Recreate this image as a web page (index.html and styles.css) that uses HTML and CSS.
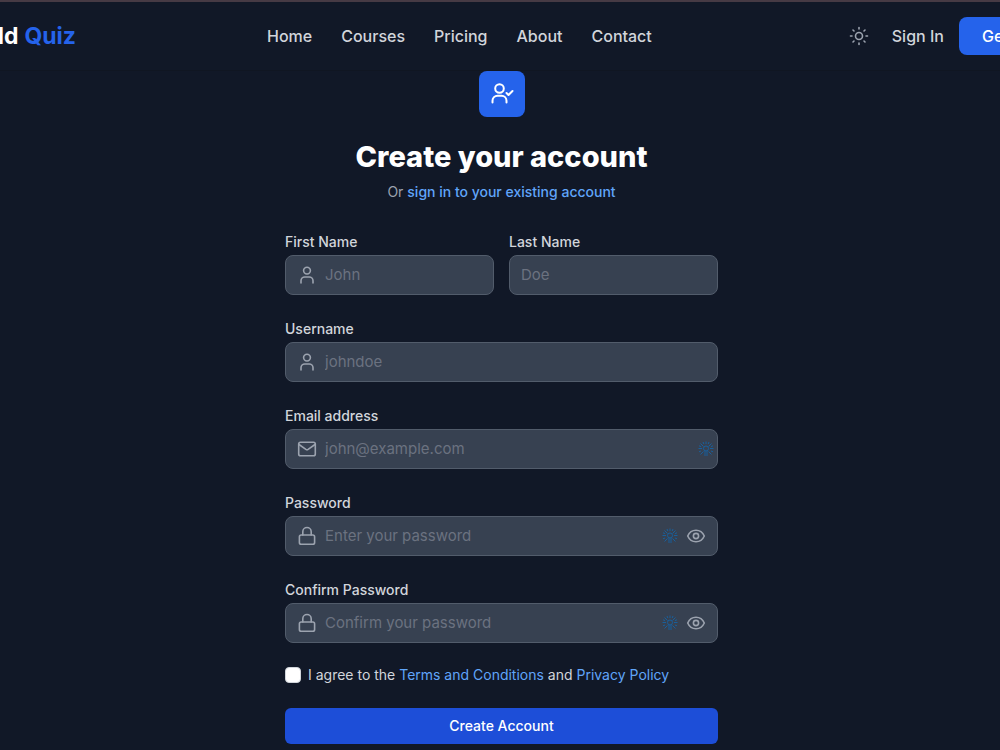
FILE: index.html
```html
<!DOCTYPE html>
<html lang="en">
<head>
<meta charset="utf-8">
<meta name="viewport" content="width=device-width, initial-scale=1">
<title>Create your account</title>
<link rel="stylesheet" href="styles.css">
</head>
<body>
<svg class="sprite" aria-hidden="true">
  <symbol id="user" viewBox="0 0 20 20"><circle cx="10" cy="5.6" r="3.4"/><path d="M4 18v-2.2a3.8 3.8 0 0 1 3.8-3.8h4.4a3.8 3.8 0 0 1 3.8 3.8V18"/></symbol>
  <symbol id="mail" viewBox="0 0 20 20"><rect x="1.7" y="3.3" width="16.6" height="13.4" rx="1.8"/><path d="M2 5.5l6.9 4.9a2 2 0 0 0 2.2 0L18 5.5"/></symbol>
  <symbol id="lock" viewBox="0 0 20 20"><rect x="2.4" y="9" width="15.2" height="9.3" rx="1.8"/><path d="M5.8 9V5.7a4.2 4.2 0 0 1 8.4 0V9"/></symbol>
  <symbol id="eye" viewBox="0 0 20 20"><path d="M1.7 10C3.3 6.4 6.3 4.3 10 4.3s6.7 2.1 8.3 5.7c-1.6 3.6-4.6 5.7-8.3 5.7S3.3 13.6 1.7 10z"/><circle cx="10" cy="10" r="2.6"/></symbol>
  <symbol id="burst" viewBox="0 0 16 16"><circle cx="8" cy="7.5" r="2.5"/><path d="M8 .5v2.500M7 10v5M9 10v5M.5 7.500H4M12 7.500h3.500M2.500 2.500l3 3M13.500 2.500l-3 3M2.500 13.500l3-3M13.500 13.500l-3-3M5 1l.8 2M11 1l-.8 2M1 4.800l2 .8M15 4.800l-2 .8M1 10.800l2-.8M15 10.800l-2-.8"/></symbol>
</svg>

<header class="header">
  <div class="header-inner">
    <a class="logo" href="#">ld <span class="logo-accent">Quiz</span></a>
    <nav class="nav" aria-label="Main">
      <a href="#">Home</a>
      <a href="#">Courses</a>
      <a href="#">Pricing</a>
      <a href="#">About</a>
      <a href="#">Contact</a>
    </nav>
    <div class="actions">
      <button class="theme" type="button" aria-label="Toggle theme">
        <svg class="sun" viewBox="0 0 20 20"><circle cx="10" cy="10" r="3.500"/><path d="M10 1.500v1.500M10 17v1.500M1.500 10H3M17 10h1.500M4 4l1 1M15 15l1 1M4 16l1-1M15 5l1-1"/></svg>
      </button>
      <a class="signin" href="#">Sign In</a>
      <a class="start" href="#">Get Started</a>
    </div>
  </div>
</header>

<main class="main">
  <div class="badge">
    <svg class="badge-icon" viewBox="0 0 24 24"><circle cx="9.500" cy="6.500" r="4.300"/><path d="M2.500 20.500v-1.800a5 5 0 0 1 5-5h4a5 5 0 0 1 5 5v1.800M16.500 11l2 2 4-4"/></svg>
  </div>
  <h1 class="title">Create your account</h1>
  <p class="subtitle">Or <a href="#">sign in to your existing account</a></p>

  <form class="form">
    <div class="row">
      <div class="group">
        <label for="first">First Name</label>
        <div class="field"><svg class="icon"><use href="#user"/></svg><input id="first" type="text" placeholder="John"></div>
      </div>
      <div class="group">
        <label for="last">Last Name</label>
        <div class="field"><input id="last" type="text" placeholder="Doe"></div>
      </div>
    </div>
    <div class="group">
      <label for="username">Username</label>
      <div class="field"><svg class="icon"><use href="#user"/></svg><input id="username" type="text" placeholder="johndoe"></div>
    </div>
    <div class="group">
      <label for="email">Email address</label>
      <div class="field field-email"><svg class="icon"><use href="#mail"/></svg><input id="email" type="email" placeholder="john@example.com"><svg class="burst"><use href="#burst"/></svg></div>
    </div>
    <div class="group">
      <label for="password">Password</label>
      <div class="field"><svg class="icon"><use href="#lock"/></svg><input id="password" type="password" placeholder="Enter your password"><svg class="burst"><use href="#burst"/></svg><button class="reveal" type="button" aria-label="Show password"><svg class="icon"><use href="#eye"/></svg></button></div>
    </div>
    <div class="group">
      <label for="confirm">Confirm Password</label>
      <div class="field"><svg class="icon"><use href="#lock"/></svg><input id="confirm" type="password" placeholder="Confirm your password"><svg class="burst"><use href="#burst"/></svg><button class="reveal" type="button" aria-label="Show confirmed password"><svg class="icon"><use href="#eye"/></svg></button></div>
    </div>
    <div class="consent">
      <div class="agree">
        <input id="agree" type="checkbox">
        <label for="agree">I agree to the <a href="#">Terms and Conditions</a> and <a href="#">Privacy Policy</a></label>
      </div>
      <button class="submit" type="submit">Create Account</button>
    </div>
  </form>
</main>
</body>
</html>
```
FILE: styles.css
```css
* { box-sizing: border-box; }
body {
  margin: 0;
  background: #111827;
  color: #d1d5db;
  font-family: Inter, sans-serif;
  font-size: 14px;
  line-height: 20px;
}
a { color: #60a5fa; text-decoration: none; }
button, input { font: inherit; }
svg {
  display: block;
  flex: none;
  fill: none;
  stroke: currentColor;
  stroke-width: 1.6;
  stroke-linecap: round;
  stroke-linejoin: round;
}
.sprite { display: none; }

.header {
  overflow: hidden;
  border-top: 2px solid #463a44;
  border-bottom: 1px solid #101622;
  background: #111827;
}
.header-inner {
  display: flex;
  align-items: center;
  justify-content: space-between;
  height: 68px;
  margin-right: -92px;
  font-size: 16px;
  font-weight: 500;
  white-space: nowrap;
}
.logo {
  display: flex;
  justify-content: flex-end;
  gap: 6px;
  width: 76px;
  color: #fff;
  font-size: 23px;
  font-weight: 700;
}
.logo-accent { color: #2563eb; }
.nav { display: flex; gap: 29px; margin-right: 6px; }
.nav a, .signin { color: #d1d5db; }
.actions { display: flex; align-items: center; }
.theme {
  padding: 0;
  border: 0;
  background: none;
  color: #9ca3af;
}
.sun { width: 20px; height: 20px; }
.signin { margin: 0 15px 0 23px; }
.start {
  padding: 9px 23px;
  border-radius: 8px;
  background: #2563eb;
  color: #fff;
}

.main {
  display: flex;
  flex-direction: column;
  align-items: center;
  padding: 0 16px 0 19px;
}
.badge {
  display: grid;
  place-items: center;
  width: 46px;
  height: 46px;
  border-radius: 8px;
  background: #2563eb;
  color: #fff;
}
.badge-icon { width: 24px; height: 24px; stroke-width: 2; }
.title {
  margin: 22px 0 8px;
  color: #fff;
  font-size: 29px;
  font-weight: 800;
  line-height: 35px;
}
.subtitle { margin: 0; color: #9ca3af; }
.subtitle a { font-weight: 500; }

.form {
  display: flex;
  flex-direction: column;
  gap: 24px;
  width: 100%;
  max-width: 433px;
  margin-top: 30px;
}
.row { display: grid; grid-template-columns: 1fr 1fr; gap: 15px; }
.group { display: flex; flex-direction: column; gap: 3px; min-width: 0; }
.group label { font-weight: 500; }
.field {
  display: flex;
  align-items: center;
  gap: 8px;
  height: 40px;
  padding: 0 11px;
  border: 1px solid #525c6b;
  border-radius: 8px;
  background: #374151;
  color: #9ca3af;
}
.field-email { padding-right: 3px; }
.field input {
  flex: 1;
  min-width: 0;
  padding: 0;
  border: 0;
  outline: 0;
  background: none;
  color: #fff;
  font-size: 15px;
}
.field input::placeholder { color: #6b7280; opacity: 1; }
.icon { width: 20px; height: 20px; }
.burst { width: 16px; height: 16px; color: #195f9b; stroke-width: 1; stroke-linecap: butt; }
.reveal {
  padding: 0;
  border: 0;
  background: none;
  color: #9ca3af;
}
.consent {
  display: flex;
  flex-direction: column;
  gap: 23px;
  margin-top: -2px;
}
.agree { display: flex; align-items: center; gap: 7px; }
.agree input {
  appearance: none;
  width: 16px;
  height: 16px;
  margin: 0;
  border: 1px solid #d1d5db;
  border-radius: 4px;
  background: #fff;
}
.agree input:checked { background: #2563eb; }
.submit {
  height: 36px;
  border: 0;
  border-radius: 6px;
  background: #1d4ed8;
  color: #fff;
  font-weight: 500;
}
```
